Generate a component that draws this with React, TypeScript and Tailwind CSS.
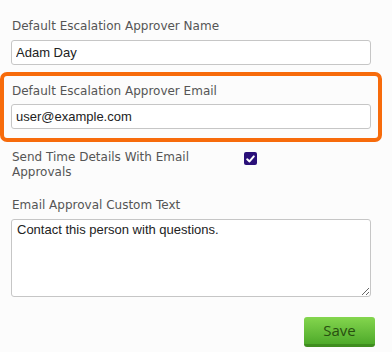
import React, { useState } from 'react';

const labelCls = "block text-[12px] leading-[15px] text-[#555] font-['DejaVu_Sans',Verdana,sans-serif]";
const inputCls = "block w-[360px] h-[25px] rounded-[3px] border border-[#c6c6c6] bg-white px-[4px] text-[13px] text-[#222] font-['Liberation_Sans',Arial,sans-serif] outline-none";

const App: React.FC = () => {
    const [name, setName] = useState('Adam Day');
    const [email, setEmail] = useState('user@example.com');
    const [sendTime, setSendTime] = useState(true);
    const [customText, setCustomText] = useState('Contact this person with questions.');

    return (
        <div className="w-[392px] h-[352px] bg-[#fcfcfc] overflow-hidden">
            <div className="pt-[19px] pl-[11px]">
                <label htmlFor="approverName" className={labelCls + ' pl-[1px]'}>Default Escalation Approver Name</label>
                <input id="approverName" className={inputCls + ' mt-[6px]'} value={name} onChange={e => setName(e.target.value)} />
            </div>

            <div className="mt-[7px] w-[382px] rounded-[7px] border-4 border-[#f76b0b] px-[7px] pt-[8px] pb-[9px]">
                <label htmlFor="approverEmail" className={labelCls + ' pl-[1px]'}>Default Escalation Approver Email</label>
                <input id="approverEmail" className={inputCls + ' mt-[5px]'} value={email} onChange={e => setEmail(e.target.value)} />
            </div>

            <div className="mt-[8px] pl-[12px] flex items-start">
                <span className={labelCls + ' w-[210px] leading-[15.5px]'}>Send Time Details With Email Approvals</span>
                <button
                    type="button"
                    onClick={() => setSendTime(!sendTime)}
                    className={`ml-[22px] mt-[2px] w-[13px] h-[13px] rounded-[2px] flex items-center justify-center ${sendTime ? 'bg-[#2a1079]' : 'bg-white border border-[#999]'}`}
                >
                    {sendTime && (
                        <svg width="9" height="8" viewBox="0 0 9 8">
                            <path d="M1.2 4.3 L3.5 6.4 L7.8 1.4" fill="none" stroke="white" strokeWidth="2" strokeLinecap="round" strokeLinejoin="round" />
                        </svg>
                    )}
                </button>
            </div>

            <div className="mt-[18px] pl-[11px]">
                <label htmlFor="customText" className={labelCls + ' pl-[1px]'}>Email Approval Custom Text</label>
                <textarea
                    id="customText"
                    className="mt-[6px] block w-[360px] h-[78px] rounded-[3px] border border-[#c6c6c6] bg-white px-[5px] py-[2px] text-[13px] leading-[16px] text-[#222] font-['Liberation_Sans',Arial,sans-serif] outline-none"
                    value={customText}
                    onChange={e => setCustomText(e.target.value)}
                />
            </div>

            <div className="mt-[20px] flex justify-end pr-[17px]">
                <button
                    type="button"
                    className="w-[71px] h-[30px] rounded-[3px] border-b-[3px] border-[#3f8d1f] bg-gradient-to-b from-[#84d64e] to-[#4eaa2a] text-[15px] text-[#284f10] font-['Open_Sans',sans-serif] flex items-center justify-center"
                >
                    Save
                </button>
            </div>
        </div>
    );
};

export default App;
